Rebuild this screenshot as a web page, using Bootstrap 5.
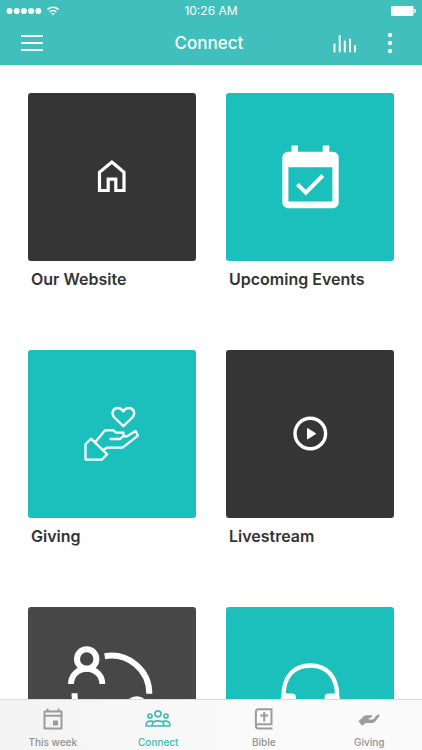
<!DOCTYPE html>
<html lang="en">
<head>
<meta charset="utf-8">
<meta name="viewport" content="width=device-width, initial-scale=1">
<title>Connect</title>
<link href="https://cdn.jsdelivr.net/npm/bootstrap@5.3.0/dist/css/bootstrap.min.css" rel="stylesheet">
<style>
  body { font-family: Inter, "Liberation Sans", sans-serif; color: #333; }
  svg { display: block; }
  .app-header { background: #40bfbc; color: #fff; }
  .status-bar { height: 22px; padding: 0 6px; font-size: 12px; line-height: 22px; }
  .title-bar { height: 43px; padding: 0 21px 2px; }
  .title-bar h1 { font-size: 17px; line-height: 22px; font-weight: 500; }
  .status-bar > *, .title-bar > * { flex: 1 1 0; }
  .bar-btn { color: inherit; line-height: 0; }
  .content { min-height: 0; padding: 28px 28px 0; scrollbar-width: none; }
  .content::-webkit-scrollbar { display: none; }
  .tiles { display: grid; grid-template-columns: 1fr 1fr; column-gap: 30px; row-gap: 60px; }
  .tile { color: #333; }
  .tile-art { border-radius: 3px; background: #1bbfbc; color: #fff; }
  .tile-art.dark { background: #353535; }
  .tile-art.grey { background: #474747; }
  .tile-name { padding: 7px 3px 0; font-size: 16px; line-height: 22px; font-weight: 600; }
  .tab-bar { background: linear-gradient(90deg, #f3f3f3, #fafafa 60%); border-top: 1px solid #dcdcdc; }
  .tab { color: #929292; font-size: 10px; line-height: 14px; font-weight: 500; padding: 7px 0 1px; gap: 4px; }
  .tab.active { color: #40b8b5; }
  .tab-bar svg { color: #9c9c9c; }
  .tab-bar .active svg { color: #40bab6; }
</style>
</head>
<body>
<div class="vh-100 d-flex flex-column overflow-hidden">
  <header class="app-header">
    <div class="status-bar d-flex align-items-center">
      <div class="d-flex align-items-center gap-1">
        <svg width="36" height="8" viewBox="0 0 36 8" fill="currentColor" aria-hidden="true"><circle cx="3.5" cy="4" r="3"/><circle cx="10.7" cy="4" r="3"/><circle cx="17.9" cy="4" r="3"/><circle cx="25.1" cy="4" r="3"/><circle cx="32.3" cy="4" r="3"/></svg>
        <svg width="14" height="10" viewBox="0 0 14 10" fill="none" stroke="currentColor" stroke-width="1.5" aria-hidden="true"><path d="M1.5 3.6C4.6.6 9.4.6 12.5 3.6M3.7 5.9c1.9-1.8 4.7-1.8 6.6 0"/><path d="M7 9.3 5.2 7.5c1-.9 2.6-.9 3.600 0z" fill="currentColor" stroke="none"/></svg>
      </div>
      <div class="text-center">10:26 AM</div>
      <div class="d-flex justify-content-end">
        <svg width="25" height="10" viewBox="0 0 25 10" fill="currentColor" aria-hidden="true"><rect width="22.5" height="10" rx="1"/><rect x="23.2" y="3" width="1.5" height="4" rx=".7"/></svg>
      </div>
    </div>
    <div class="title-bar d-flex align-items-center">
      <div class="d-flex">
        <button class="bar-btn btn p-0 border-0" type="button" aria-label="Menu">
          <svg width="22" height="16" viewBox="0 0 22 16" stroke="currentColor" stroke-width="2" stroke-linecap="round"><path d="M1 1h20M1 8h20M1 15h20"/></svg>
        </button>
      </div>
      <h1 class="m-0 text-center">Connect</h1>
      <div class="d-flex justify-content-end align-items-center pe-1">
        <button class="bar-btn btn p-0 border-0" type="button" aria-label="Statistics">
          <svg width="24" height="20" viewBox="0 0 24 20" stroke="currentColor" stroke-width="2" stroke-linecap="round"><path d="M1.500 11.500v7M6.700 3v15.500M11.800 8.500v10M17 6.500v12M22 13v5.500"/></svg>
        </button>
        <button class="bar-btn btn p-0 border-0 ms-4" type="button" aria-label="More">
          <svg width="16" height="22" viewBox="0 0 16 22" fill="currentColor"><circle cx="9" cy="3" r="2.200"/><circle cx="9" cy="11" r="2.200"/><circle cx="9" cy="19" r="2.200"/></svg>
        </button>
      </div>
    </div>
  </header>

  <main class="content flex-fill overflow-auto">
    <div class="tiles">
      <a class="tile text-decoration-none" href="#website">
        <div class="tile-art dark"><svg class="w-100" viewBox="0 0 168 168" fill="none" stroke="currentColor" stroke-width="3.200" aria-hidden="true"><path d="M71.500 97.500V79.300L83.900 69l12.100 10.300v18.200h-8.200V86.200h-7.600v11.300z"/></svg></div>
        <div class="tile-name">Our Website</div>
      </a>
      <a class="tile text-decoration-none" href="#events">
        <div class="tile-art"><svg class="w-100" viewBox="0 0 168 168" aria-hidden="true"><path fill="currentColor" fill-rule="evenodd" d="M65.500 52.500H72v6.300h24.700v-6.300h6.600v6.300h3.700a5.700 5.700 0 0 1 5.700 5.700v45a5.700 5.700 0 0 1-5.700 5.700H62a5.700 5.700 0 0 1-5.700-5.700v-45a5.700 5.700 0 0 1 5.700-5.700h3.500zM62.400 74.300v34.300h44V74.300z"/><path d="m71.500 91.300 8.300 8.300L96.800 82.500" fill="none" stroke="currentColor" stroke-width="4"/></svg></div>
        <div class="tile-name">Upcoming Events</div>
      </a>
      <a class="tile text-decoration-none" href="#giving">
        <div class="tile-art"><svg class="w-100" viewBox="0 0 168 168" fill="none" stroke="currentColor" stroke-width="2.300" stroke-linejoin="round" stroke-linecap="round" aria-hidden="true"><path d="M95.300 76.200 86.300 67.500C82.700 63.500 85 58 89.700 58c2.600 0 4.300 1.300 5.600 3.500C96.600 59.300 98.300 58 101 58c4.700 0 7 5.500 3.300 9.500z"/><path d="M57.500 109.700V94.300L63 88.700l16.200 15.600-5.500 5.400zM67.300 92 77 80.300h8.300L88 82.700h7.500V86L92 89h-9.500M95.500 86.300H99l8.500-5.300 2.500 4.700-15.500 12H78.700L75.500 100"/></svg></div>
        <div class="tile-name">Giving</div>
      </a>
      <a class="tile text-decoration-none" href="#livestream">
        <div class="tile-art dark"><svg class="w-100" viewBox="0 0 168 168" aria-hidden="true"><circle cx="84.300" cy="83.500" r="15.300" fill="none" stroke="currentColor" stroke-width="3.400"/><path d="M81.500 78.500v10.400l8.300-5.200z" fill="currentColor" stroke="currentColor" stroke-width="1" stroke-linejoin="round"/></svg></div>
        <div class="tile-name">Livestream</div>
      </a>
      <a class="tile text-decoration-none" href="#groups" aria-label="Groups">
        <div class="tile-art grey"><svg class="w-100" viewBox="0 0 168 168" fill="none" stroke="currentColor" stroke-width="6" aria-hidden="true"><circle cx="58.700" cy="52" r="9.700"/><path d="M43 77c0-8.700 7-15.300 15.700-15.300S74.300 68.300 74.300 77"/><path d="M76.700 49.200a38 38 0 0 1 44.600 37.500M46.500 86.300a38 38 0 0 0 38 38"/><circle cx="108.700" cy="102" r="9.700"/><path d="M93 127c0-8.700 7-15.300 15.700-15.300s15.600 6.600 15.600 15.300"/></svg></div>
      </a>
      <a class="tile text-decoration-none" href="#podcast" aria-label="Podcast">
        <div class="tile-art"><svg class="w-100" viewBox="0 0 168 168" aria-hidden="true"><path d="M57.500 95V89C57.500 69.500 68 58.500 84.300 58.500S111.200 69.500 111.200 89v6" fill="none" stroke="currentColor" stroke-width="4.300"/><path d="M58 86.500h8a4 4 0 0 1 4 4V119h-8a9 9 0 0 1-9-9V94zM110.600 86.500h-8a4 4 0 0 0-4 4V119h8a9 9 0 0 0 9-9V94z" fill="currentColor"/></svg></div>
      </a>
    </div>
  </main>

  <nav class="tab-bar d-flex" aria-label="Main">
    <a class="tab w-25 d-flex flex-column align-items-center text-decoration-none" href="#week">
      <svg width="24" height="24" viewBox="0 0 24 24" aria-hidden="true"><path fill="none" stroke="currentColor" stroke-width="2" d="M3.500 4.500h17v17h-17zM3.500 8.700h17M6.500 1.500v3M17.500 1.500v3" stroke-linejoin="round"/><path fill="currentColor" d="M12 13.500h5v5h-5z"/></svg>
      <span>This week</span>
    </a>
    <a class="tab active w-25 d-flex flex-column align-items-center text-decoration-none" href="#connect" aria-current="page">
      <svg width="26" height="24" viewBox="0 0 26 24" fill="none" stroke="currentColor" stroke-width="1.700" stroke-linejoin="round" aria-hidden="true"><circle cx="13" cy="6.800" r="3"/><circle cx="5" cy="9" r="2"/><circle cx="21" cy="9" r="2"/><path d="M1.200 19v-1.500c0-2.300 2-3.700 5.300-3.300 1 .1 1.700.4 2.200.7 1.200-.8 2.600-1.100 4.300-1.100s3.100.3 4.300 1.100c.5-.3 1.200-.6 2.200-.7 3.300-.4 5.300 1 5.300 3.300V19zM7.300 19v-1.600c0-1 .5-1.900 1.400-2.500M18.700 19v-1.600c0-1-.5-1.900-1.400-2.500"/></svg>
      <span>Connect</span>
    </a>
    <a class="tab w-25 d-flex flex-column align-items-center text-decoration-none" href="#bible">
      <svg width="24" height="24" viewBox="0 0 24 24" fill="none" stroke="currentColor" stroke-width="2" aria-hidden="true"><path d="M20.500 21.500H6.300a2.400 2.400 0 0 1-2.400-2.400V4.300a2 2 0 0 1 2-2h13.600v14.900H6.300a2.300 2.300 0 0 0-2.400 2"/><path d="M12.200 5v9.500M8.300 8.500h7.800"/></svg>
      <span>Bible</span>
    </a>
    <a class="tab w-25 d-flex flex-column align-items-center text-decoration-none" href="#give">
      <svg width="24" height="24" viewBox="0 0 24 24" fill="currentColor" aria-hidden="true"><path d="M1.500 14.200 6.800 9.200Q7.800 8.300 9 8.300h5.300q1.300.2.900 1.500l-3.700 1.900v.8h4.500L20.300 7.800Q22 6.800 22.700 8.700L18.200 14.500q-1.300 1.600-3 1.600H8.500L5 18.700z"/></svg>
      <span>Giving</span>
    </a>
  </nav>
</div>
<script src="https://cdn.jsdelivr.net/npm/bootstrap@5.3.0/dist/js/bootstrap.bundle.min.js"></script>
</body>
</html>
